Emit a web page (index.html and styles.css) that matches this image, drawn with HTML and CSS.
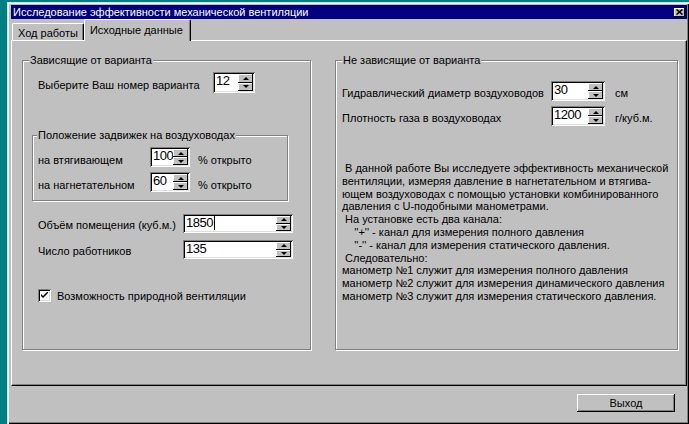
FILE: index.html
```html
<!DOCTYPE html>
<html lang="ru">
  <head>
    <meta charset="UTF-8" />
    <meta name="viewport" content="width=device-width, initial-scale=1.0" />
    <title>Исследование эффективности механической вентиляции</title>
    <link rel="stylesheet" href="styles.css">
  </head>
  <body>
    <div class="window">
      <div class="titlebar">
        <span class="title">Исследование эффективности механической вентиляции</span>
        <span class="close">
          <svg width="7" height="6" viewBox="0 0 7 6"><path d="M0.5 0.5 L6.5 5.5 M6.5 0.5 L0.5 5.5" stroke="#000" stroke-width="1.6"/></svg>
        </span>
      </div>
      <!-- tabs -->
      <div class="tabs">
        <div class="tab">Ход работы</div>
        <div class="tab active">Исходные данные</div>
      </div>
      <div class="panel">
        <fieldset class="group left">
          <legend>Зависящие от варианта</legend>
          <div class="body">
            <div class="row first">
              <span class="label w-var">Выберите Ваш номер варианта</span>
              <div class="spin s-var">
                <span class="val">12</span>
                <span class="arrows"><i class="up"></i><i class="down"></i></span>
              </div>
            </div>
            <fieldset class="group inner">
              <legend>Положение задвижек на воздуховодах</legend>
              <div class="row">
                <span class="label w-pos">на втягивающем</span>
                <div class="spin s-pos">
                  <span class="val">100</span>
                  <span class="arrows"><i class="up"></i><i class="down"></i></span>
                </div>
                <span class="unit">% открыто</span>
              </div>
              <div class="row">
                <span class="label w-pos">на нагнетательном</span>
                <div class="spin s-pos">
                  <span class="val">60</span>
                  <span class="arrows"><i class="up"></i><i class="down"></i></span>
                </div>
                <span class="unit">% открыто</span>
              </div>
            </fieldset>
            <div class="row room">
              <span class="label w-wide">Объём помещения (куб.м.)</span>
              <div class="spin s-wide">
                <span class="val">1850<b class="caret"></b></span>
                <span class="arrows"><i class="up"></i><i class="down"></i></span>
              </div>
            </div>
            <div class="row">
              <span class="label w-wide">Число работников</span>
              <div class="spin s-wide">
                <span class="val">135</span>
                <span class="arrows"><i class="up"></i><i class="down"></i></span>
              </div>
            </div>
            <div class="check-row">
              <span class="checkbox">
                <svg width="7" height="7" viewBox="0 0 7 7"><path d="M0 2 L0 4 L2 6 L7 1 L7 -1 L2 4 Z" fill="#000"/></svg>
              </span>
              <span>Возможность природной вентиляции</span>
            </div>
          </div>
        </fieldset>

        <fieldset class="group right">
          <legend>Не зависящие от варианта</legend>
          <div class="body">
            <div class="row first">
              <span class="label w-right">Гидравлический диаметр воздуховодов</span>
              <div class="spin s-right">
                <span class="val">30</span>
                <span class="arrows"><i class="up"></i><i class="down"></i></span>
              </div>
              <span class="unit">см</span>
            </div>
            <div class="row">
              <span class="label w-right">Плотность газа в воздуховодах</span>
              <div class="spin s-right">
                <span class="val">1200</span>
                <span class="arrows"><i class="up"></i><i class="down"></i></span>
              </div>
              <span class="unit">г/куб.м.</span>
            </div>
            <div class="about"> В данной работе Вы исследуете эффективность механической
вентиляции, измеряя давление в нагнетательном и втягива-
ющем воздуховодах с помощью установки комбинированного
давления с U-подобными манометрами.
 На установке есть два канала:
    ''+'' - канал для измерения полного давления
    ''-'' - канал для измерения статического давления.
 Следовательно:
манометр №1 служит для измерения полного давления
манометр №2 служит для измерения динамического давления
манометр №3 служит для измерения статического давления.</div>
          </div>
        </fieldset>
      </div>
      <div class="footer">
        <button class="btn" type="button">Выход</button>
      </div>
    </div>
  </body>
</html>
```

FILE: styles.css
```css
* {
  box-sizing: border-box;
}
body {
  margin: 0;
  background-color: #008080;
  font-family: "Liberation Sans", Arial, sans-serif;
  font-size: 11px;
  color: #000;
  overflow: hidden;
}
.window {
  margin: 2px 0 0 7px;
  width: 682px;
  height: 422px;
  padding: 3px 2px 0 4px;
  background-color: #c0c0c0;
  box-shadow: inset 1px 1px #dfdfdf, inset 2px 2px #fff, inset -1px -1px #000,
    inset -2px -2px #808080;
}
.titlebar {
  height: 14px;
  padding: 0 2px;
  display: flex;
  align-items: center;
  justify-content: space-between;
  background-color: #000080;
  color: #fff;
}
.title {
  line-height: 14px;
}
.close {
  width: 11px;
  height: 9px;
  display: flex;
  align-items: center;
  justify-content: center;
  background-color: #c0c0c0;
  box-shadow: inset -1px -1px #000, inset 1px 1px #fff;
}
.tabs {
  height: 21px;
  padding-left: 1px;
  display: flex;
  align-items: flex-end;
}
.tab {
  height: 17px;
  padding: 3px 5px 0 5px;
  border-top: 1px solid #fff;
  border-left: 1px solid #fff;
  border-right: 1px solid #000;
  border-radius: 2px 2px 0 0;
  box-shadow: inset -1px 0 #808080;
  line-height: 13px;
}
.tab.active {
  height: 22px;
  margin-bottom: -1px;
  padding: 4px 7px 0 5px;
  position: relative;
  z-index: 1;
  background-color: #c0c0c0;
}
.panel {
  height: 346px;
  padding: 13px 0 0 10px;
  display: flex;
  column-gap: 24px;
  border-top: 1px solid #fff;
  border-left: 1px solid #fff;
  border-right: 1px solid #000;
  border-bottom: 1px solid #000;
  box-shadow: inset -1px -1px #808080;
}
.group {
  margin: 0;
  padding: 0;
  min-width: 0;
  border: 1px solid #808080;
  box-shadow: inset 1px 1px #fff, 1px 1px #fff;
}
.group legend {
  margin-left: 6px;
  padding: 0 1px;
  line-height: 13px;
  background-color: #c0c0c0;
}
.left {
  width: 289px;
  height: 296px;
}
.right {
  width: 343px;
  height: 296px;
}
.left .body {
  padding-left: 15px;
}
.right .body {
  padding-left: 6px;
}
.row {
  display: flex;
  align-items: center;
  margin-top: 5px;
}
.label {
  padding-top: 4px;
  line-height: 13px;
  flex-shrink: 0;
}
.unit {
  padding-top: 4px;
  line-height: 13px;
}
.w-var {
  width: 175px;
}
.w-pos {
  width: 112px;
}
.w-wide {
  width: 145px;
}
.w-right {
  width: 209px;
}
.left .row.first {
  margin-top: 5px;
}
.left .row.first .label {
  padding-top: 6px;
}
.right .row.first {
  margin-top: 14px;
}
.inner {
  width: 256px;
  margin: 36px 0 0 -6px;
  padding: 0 0 8px 5px;
}
.inner legend {
  margin-left: -1px;
}
.inner .row {
  margin-top: 5px;
}
.inner .label,
.inner .unit {
  padding-top: 7px;
}
.inner .unit {
  margin-left: 8px;
}
.right .unit {
  margin-left: 10px;
}
.room {
  margin-top: 13px !important;
}
.room + .row {
  margin-top: 7px;
}

/* spin edit */
.spin {
  height: 20px;
  padding: 2px;
  display: flex;
  flex-shrink: 0;
  background-color: #fff;
  box-shadow: inset 1px 1px #808080, inset -1px -1px #fff, inset 2px 2px #000,
    inset -2px -2px #dfdfdf;
}
.s-var {
  width: 42px;
  height: 21px;
}
.s-pos {
  width: 40px;
}
.s-wide {
  width: 110px;
  height: 19px;
}
.s-right {
  width: 54px;
}
.val {
  flex: 1;
  padding-left: 1px;
  font-size: 13px;
  letter-spacing: -0.5px;
  line-height: 14px;
  display: flex;
  align-items: flex-start;
}
.caret {
  width: 1px;
  height: 14px;
  margin-left: 1px;
  background-color: #000;
}
.arrows {
  width: 15px;
  display: flex;
  flex-flow: column nowrap;
}
.arrows i {
  flex: 1;
  display: flex;
  align-items: center;
  justify-content: center;
  background-color: #c0c0c0;
  box-shadow: inset -1px -1px #000, inset 1px 1px #fff;
}
.arrows .up::after {
  content: "";
  border-left: 3px solid transparent;
  border-right: 3px solid transparent;
  border-bottom: 3px solid #000;
}
.arrows .down::after {
  content: "";
  border-left: 3px solid transparent;
  border-right: 3px solid transparent;
  border-top: 3px solid #000;
}

/* checkbox */
.check-row {
  margin-top: 30px;
  display: flex;
  align-items: center;
  column-gap: 6px;
}
.checkbox {
  width: 13px;
  height: 13px;
  display: flex;
  align-items: center;
  justify-content: center;
  background-color: #fff;
  box-shadow: inset 1px 1px #808080, inset -1px -1px #fff, inset 2px 2px #000,
    inset -2px -2px #dfdfdf;
}
.about {
  margin-top: 36px;
  white-space: pre;
  line-height: 12.8px;
}
.footer {
  padding: 8px 12px 0 0;
  display: flex;
  justify-content: flex-end;
}
.btn {
  width: 98px;
  height: 18px;
  padding: 0;
  border: none;
  background-color: #c0c0c0;
  font-family: inherit;
  font-size: 11px;
  color: #000;
  box-shadow: inset -1px -1px #000, inset 1px 1px #fff, inset -2px -2px #808080;
}
```
